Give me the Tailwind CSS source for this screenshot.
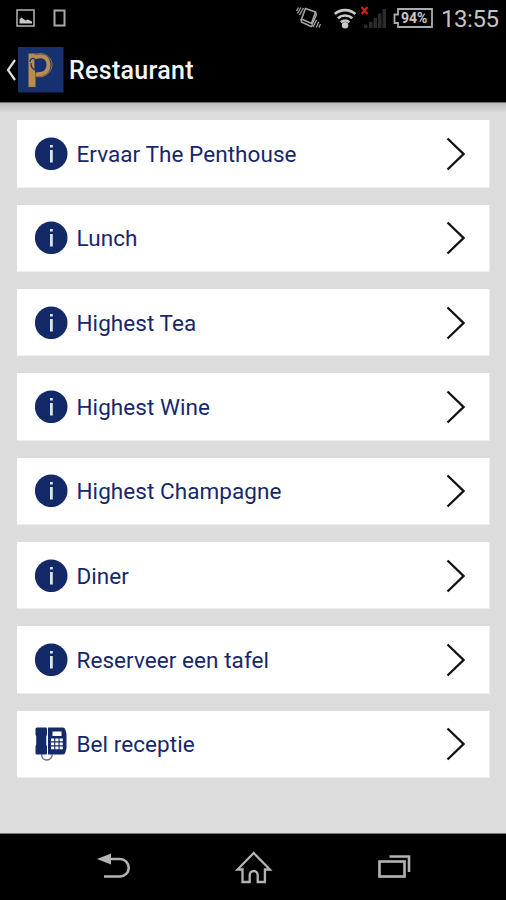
<!DOCTYPE html>
<html lang="nl">
<head>
  <meta charset="UTF-8">
  <meta name="viewport" content="width=device-width, initial-scale=1.0">
  <title>Restaurant</title>
  <script src="https://cdn.jsdelivr.net/npm/@tailwindcss/browser@4"></script>
</head>
<body class="bg-black font-['Roboto',sans-serif]">
  <div class="flex flex-col w-[506px] h-[900px] overflow-hidden bg-[#dcdcdc]">

    <!-- Status bar -->
    <div class="flex items-center justify-between h-[36px] bg-black pl-4 pr-[7px] shrink-0">
      <div class="flex items-center gap-[17px]">
        <svg class="w-5 h-5" viewBox="0 0 20 20" fill="none">
          <rect x="1" y="2" width="17" height="16" stroke="#aaa" stroke-width="1.6"/>
          <path d="M3.500 15.500v-4l2-2 2 1.500 2 1.500 2-1 4.500 2v2z" fill="#c8c8c8"/>
        </svg>
        <svg class="w-[14px] h-5" viewBox="0 0 14 20" fill="none">
          <rect x="1.500" y="2.500" width="10" height="15" stroke="#aaa" stroke-width="2"/>
        </svg>
      </div>
      <div class="flex items-center">
        <svg class="w-[26px] h-6" viewBox="0 0 26 24" fill="none" stroke="#a5a5a5" stroke-width="1.300">
          <path d="M9.500 2.500l10 3.500-4 11.500-10-4.500z" stroke-width="1.600"/>
          <path d="M5 13l.5 3 9.500 4.500 2-2M19.500 6l.8 3-4 9" stroke-width="1.500"/>
          <path d="M7.500 2L3.500 9M5 1.500L1.500 7.500M2.500 1.500L.5 5"/>
          <path d="M20.500 14L17 21M22.700 16l-2.500 5.500M24.500 18L23 21.500"/>
        </svg>
        <svg class="w-6 h-6 ml-3" viewBox="0 0 24 24" fill="none" stroke="#c8c8c8" stroke-width="2.700">
          <path d="M.8 8a15.500 15.500 0 0 1 20.600 0"/>
          <path d="M3.900 12.200a11 11 0 0 1 14.400 0"/>
          <path d="M6.900 16.200a6.500 6.500 0 0 1 8.400 0"/>
          <circle cx="11.100" cy="19.300" r="3.200" fill="#c8c8c8" stroke="none"/>
        </svg>
        <svg class="w-[28px] h-6 ml-[2px]" viewBox="0 0 28 24" fill="none">
          <path d="M4 18.500h3.500V22H4zM9 16h3.500v6H9zM13.500 12H17v10h-3.500zM18 7.500h3.500V22H18zM22.500 3H26v19h-3.500z" fill="#2b2b2b"/>
          <path d="M1.500 1l6 7M7.500 1l-6 7" stroke="#e01717" stroke-width="2.200"/>
        </svg>
        <div class="relative w-10 h-6 ml-[5px]">
          <svg class="w-10 h-6" viewBox="0 0 40 24" fill="none" stroke="#aaa" stroke-width="1.800">
            <path d="M5 3h34v18H5v-4H1.500V8.500H5z"/>
          </svg>
          <span class="absolute left-[8px] top-[3px] text-[14px] leading-[18px] font-bold text-[#c8c8c8]">94%</span>
        </div>
        <span class="ml-2 text-[24px] leading-6 pt-px text-[#c4c4c4] tracking-[-0.450px] w-[58px] whitespace-nowrap">13:55</span>
      </div>
    </div>

    <!-- Action bar -->
    <header class="flex items-center h-[67px] bg-black border-b border-[#6f6f6f] pl-[6px] pt-[2px] shrink-0">
      <svg class="w-[11px] h-6" viewBox="0 0 11 24" fill="none" stroke="#ddd" stroke-width="2.200">
        <path d="M9 2L2 12l7 10"/>
      </svg>
      <svg class="w-[46px] h-[46px] ml-[1px]" viewBox="0 0 46 46" fill="none">
        <rect width="45.500" height="45.500" fill="#17306f"/>
        <path d="M10.500 6.500h7v33.500h-7z" fill="#b98d4e"/>
        <path d="M17 10.500c9-3.500 13.500 1 13.500 7.500S26 28 18 27" stroke="#b98d4e" stroke-width="4"/>
        <path d="M15 8C27 3.500 34.500 11 34 18.500 33.500 26 26 31.500 18 29.500" stroke="#9b794d" stroke-width="1"/>
        <path d="M12 15c0-4 5-5 5-1v9c-3-1-4-4-4-7" stroke="#17306f" stroke-width="1.200"/>
        <path d="M17.800 12.500v13" stroke="#17306f" stroke-width="1.500"/>
      </svg>
      <h1 class="ml-[5px] mt-[2px] text-[25px] leading-8 text-[#f4f4f4] font-medium tracking-[0.300px]">Restaurant</h1>
    </header>
    <div class="h-[10px] bg-linear-to-b from-[#bdbdbd] to-[#dcdcdc] shrink-0"></div>

    <!-- Menu -->
    <main class="flex-1 pl-[17px] pr-4 pt-[7.300px]">
      <ul id="menu" class="flex flex-col gap-[17px]"></ul>
    </main>

    <!-- Navigation bar -->
    <nav class="flex items-center h-[67px] bg-black border-t border-[#777] shrink-0 pl-[97px]">
      <svg class="w-9 h-8 mt-[2px]" viewBox="0 0 36 32" fill="none">
        <path d="M10 7h13a8.700 8.700 0 0 1 0 17.500H7" stroke="#b4b4b4" stroke-width="2.600"/>
        <path d="M0 7L14 1.500v11z" fill="#b4b4b4"/>
      </svg>
      <svg class="w-10 h-9 ml-[101px] mt-px" viewBox="0 0 40 36" fill="none" stroke="#b4b4b4" stroke-width="2.300">
        <path d="M19.700 3L3.500 19.500h5V32h7.200v-7a4 4 0 0 1 8 0v7h7.200V19.500h5z"/>
      </svg>
      <svg class="w-[34px] h-8 ml-[104px] mt-[3px]" viewBox="0 0 34 32" fill="none" stroke="#b4b4b4">
        <rect x="1.500" y="8.500" width="25" height="15" stroke-width="2.600"/>
        <path d="M11.500 3.500h19.500V19" stroke-width="2.600"/>
      </svg>
    </nav>
  </div>

  <template id="info-icon">
    <svg class="w-[33px] h-[33px]" viewBox="0 0 33 33">
      <circle cx="16.200" cy="16.800" r="16.300" fill="#142a68"/>
      <rect x="15" y="8" width="2.800" height="2.500" fill="#dfe3f0"/>
      <rect x="15" y="13" width="2.800" height="12.500" fill="#dfe3f0"/>
    </svg>
  </template>

  <template id="phone-icon">
    <svg class="w-[33px] h-[35px]" viewBox="0 0 33 35" fill="none">
      <path d="M2 1.500h9q1 0 1 1.500v5.500l-.7 2v8l.7 2V27q0 1.500-1 1.500H2Q.5 28.500.5 27v-6.500l.7-2v-8l-.7-2V3Q.5 1.500 2 1.500z" fill="#142a68"/>
      <path d="M13 1.500h15q2 0 2.500 2.500l1 4v14l-1 4q-.5 2.500-2.500 2.500H13z" fill="#142a68"/>
      <path d="M17.500 5.500h9V10h-9zM16 12.500h3.200v2.800H16zM20.300 12.500h3.200v2.800h-3.200zM24.600 12.500h3.200v2.800h-3.200zM16 16.500h3.200v2.800H16zM20.300 16.500h3.200v2.800h-3.200zM24.600 16.500h3.200v2.800h-3.200zM16 20.500h3.200v2.800H16zM20.300 20.500h3.200v2.800h-3.200zM24.600 20.500h3.200v2.800h-3.200z" fill="#fff"/>
      <path d="M6.500 28c0 8 10 8 11 0" stroke="#5d6b99" stroke-width="1.400"/>
    </svg>
  </template>

  <template id="row">
    <li class="flex items-center h-[67.350px] bg-white pl-[17.500px] pr-6 border-b border-r border-[#eee]">
      <span class="icon w-[33px] shrink-0"></span>
      <span class="label ml-[9px] mt-px flex-1 whitespace-nowrap text-[22.500px] leading-7 text-[#17276b] tracking-[0.060px]"></span>
      <svg class="w-5 h-9 mt-px" viewBox="0 0 20 36" fill="none" stroke="#111" stroke-width="2.300">
        <path d="M2.500 2.500L18.500 18 2.500 33.500"/>
      </svg>
    </li>
  </template>

  <script>
    const items = [
      ['Ervaar The Penthouse', 'info-icon'],
      ['Lunch', 'info-icon'],
      ['Highest Tea', 'info-icon'],
      ['Highest Wine', 'info-icon'],
      ['Highest Champagne', 'info-icon'],
      ['Diner', 'info-icon'],
      ['Reserveer een tafel', 'info-icon'],
      ['Bel receptie', 'phone-icon']
    ];
    const menu = document.getElementById('menu');
    items.forEach(([label, icon]) => {
      const row = document.getElementById('row').content.cloneNode(true);
      row.querySelector('.icon').appendChild(document.getElementById(icon).content.cloneNode(true));
      row.querySelector('.label').textContent = label;
      menu.appendChild(row);
    });
  </script>
</body>
</html>
